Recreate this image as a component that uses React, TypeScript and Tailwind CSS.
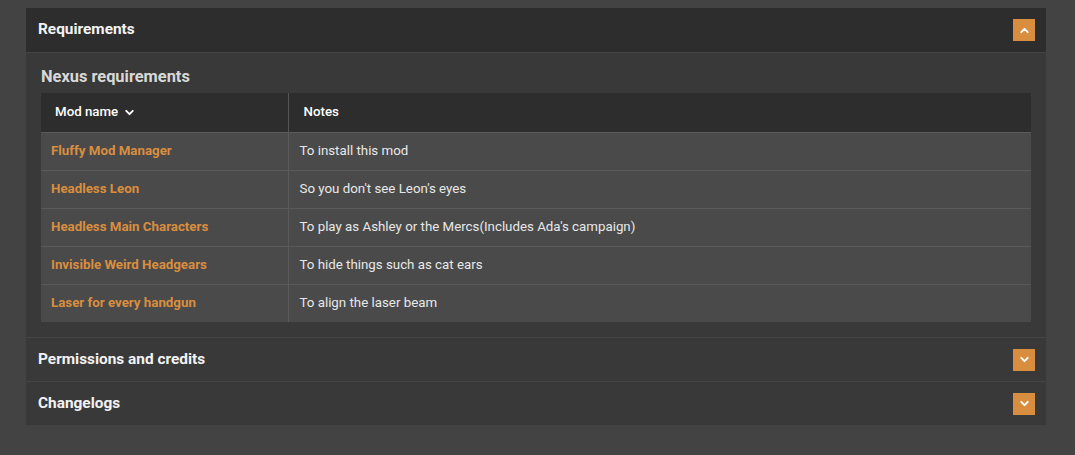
import { ChevronDown, ChevronUp } from 'lucide-react';

const requirements = [
  { name: 'Fluffy Mod Manager', notes: 'To install this mod' },
  { name: 'Headless Leon', notes: "So you don't see Leon's eyes" },
  { name: 'Headless Main Characters', notes: "To play as Ashley or the Mercs(Includes Ada's campaign)" },
  { name: 'Invisible Weird Headgears', notes: 'To hide things such as cat ears' },
  { name: 'Laser for every handgun', notes: 'To align the laser beam' },
];

function ToggleButton({ open }: { open: boolean }) {
  return (
    <span className="flex h-[22px] w-[22px] items-center justify-center bg-[#d98e3f] text-white">
      {open ? <ChevronUp size={13} strokeWidth={3.5} /> : <ChevronDown size={13} strokeWidth={3.5} />}
    </span>
  );
}

function SectionHeader({ title, open }: { title: string; open: boolean }) {
  return (
    <div className={`flex items-center justify-between pl-3 pr-[11px] ${open ? 'h-[44px]' : 'h-[43px]'}`}>
      <h2 className="text-[15.4px] font-bold text-[#f2f2f2]">{title}</h2>
      <ToggleButton open={open} />
    </div>
  );
}

export default function App() {
  return (
    <div className="min-h-[455px] bg-[#434343] px-[26px] pt-2 pb-8 font-['Roboto',sans-serif]">
      <div className="w-[1020px]">
        {/* Requirements */}
        <section className="bg-[#393939]">
          <div className="bg-[#2d2d2d] border-b border-[#444]">
            <SectionHeader title="Requirements" open />
          </div>
          <div className="px-[15px] pt-[13px] pb-[15px]">
            <h3 className="mb-[5px] text-[16.4px] leading-[22px] font-bold text-[#d8d8d8]">Nexus requirements</h3>
            <table className="w-full border-collapse text-[13.3px]">
              <thead>
                <tr className="h-[39px] bg-[#2d2d2d] text-left text-white">
                  <th className="w-[247px] border-r border-[#555] pl-[14px] font-medium">
                    <span className="inline-flex items-center gap-[5px]">
                      Mod name
                      <ChevronDown size={13} strokeWidth={3.5} />
                    </span>
                  </th>
                  <th className="pl-[15px] font-medium">Notes</th>
                </tr>
              </thead>
              <tbody>
                {requirements.map((req) => (
                  <tr key={req.name} className="h-[38px] border-t border-[#5a5a5a] bg-[#4a4a4a]">
                    <td className="border-r border-[#5a5a5a] pl-[10px] font-bold text-[#d98e3f]">{req.name}</td>
                    <td className="pl-[11px] text-[#e8e8e8]">{req.notes}</td>
                  </tr>
                ))}
              </tbody>
            </table>
          </div>
        </section>

        {/* Collapsed sections */}
        <section className="border-t border-[#444] bg-[#393939]">
          <SectionHeader title="Permissions and credits" open={false} />
        </section>
        <section className="border-t border-[#444] bg-[#393939]">
          <SectionHeader title="Changelogs" open={false} />
        </section>
      </div>
    </div>
  );
}
